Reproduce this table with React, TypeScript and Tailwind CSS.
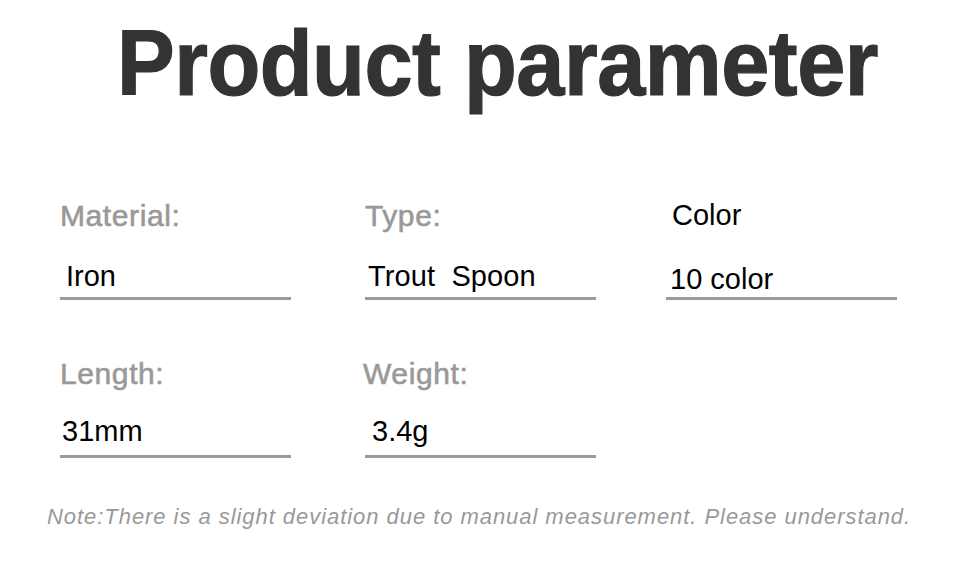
import React from 'react';

type Field = {
  label: string;
  value: string;
  labelClass?: string;
  valueClass?: string;
  className?: string;
};

const ParamField: React.FC<Field> = ({ label, value, labelClass, valueClass, className }) => (
  <div className={`w-[231px] ${className ?? ''}`}>
    <div
      className={`leading-none ${labelClass ?? 'text-[30px] tracking-[0.6px] text-[#999] [-webkit-text-stroke:0.6px_#999]'}`}
    >
      {label}
    </div>
    <div className={`border-b-[3px] border-[#9a9a9a] text-[29px] leading-none whitespace-pre text-black ${valueClass ?? ''}`}>
      {value}
    </div>
  </div>
);

export default function App() {
  return (
    <div className="h-[561px] w-[960px] overflow-hidden bg-white font-['Liberation_Sans',Arial,sans-serif]">
      <h1 className="ml-[117px] mt-[17px] origin-left scale-x-[0.94] whitespace-nowrap text-[92px] font-bold leading-none tracking-[-0.5px] text-[#333] [-webkit-text-stroke:1.2px_#333]">
        Product parameter
      </h1>

      <div className="mt-[92px] flex pl-[60px]">
        <ParamField label="Material:" value="Iron" valueClass="mt-[31px] pb-[6px] pl-[6px]" />
        <ParamField
          label="Type:"
          value="Trout  Spoon"
          valueClass="mt-[31px] pb-[6px] pl-[3px] tracking-[0.1px]"
          className="ml-[74px]"
        />
        <ParamField
          label="Color"
          value="10 color"
          labelClass="pl-[6px] text-[29px] text-black"
          valueClass="mt-[35px] pb-[3px] pl-[4px]"
          className="ml-[70px]"
        />
      </div>

      <div className="mt-[59px] flex pl-[60px]">
        <ParamField label="Length:" value="31mm" valueClass="mt-[28px] pb-[9px] pl-[2px]" />
        <ParamField
          label="Weight:"
          value="3.4g"
          labelClass="-ml-[2px] text-[30px] tracking-[0.6px] text-[#999] [-webkit-text-stroke:0.6px_#999]"
          valueClass="mt-[28px] pb-[9px] pl-[7px]"
          className="ml-[74px]"
        />
      </div>

      <p className="mt-[48px] whitespace-nowrap pl-[47px] text-[22px] italic leading-none tracking-[0.95px] text-[#999]">
        Note:There is a slight deviation due to manual measurement. Please understand.
      </p>
    </div>
  );
}
